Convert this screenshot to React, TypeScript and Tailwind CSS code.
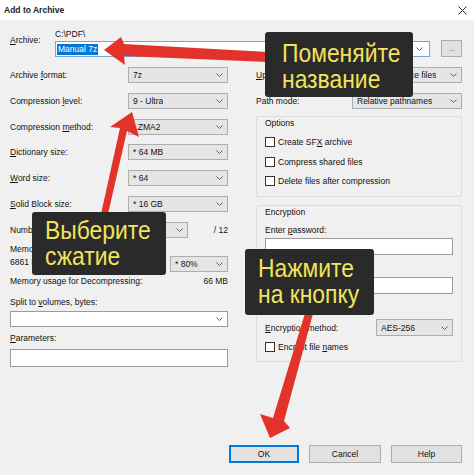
import React from 'react'

const Chev = () => (
  <svg width="7" height="4" viewBox="0 0 7 4" className="shrink-0">
    <path d="M0.5 0.5L3.5 3.5L6.5 0.5" fill="none" stroke="#606060" strokeWidth="1" />
  </svg>
)

const Select = ({ value, className = '' }: { value: string; className?: string }) => (
  <div className={`h-[16px] border border-[#adadad] bg-[#e5e5e5] flex items-center justify-between pl-[4px] pr-[4px] ${className}`}>
    <span className="truncate">{value}</span>
    <Chev />
  </div>
)

const Check = ({ children }: { children: React.ReactNode }) => (
  <div className="h-[12px] flex items-center gap-[3px]">
    <span className="w-[10px] h-[10px] border border-[#333] bg-white shrink-0" />
    <span>{children}</span>
  </div>
)

const U = ({ children }: { children: React.ReactNode }) => <span className="underline underline-offset-[1px]">{children}</span>

const Row = ({ label, value }: { label: React.ReactNode; value: string }) => (
  <div className="h-[16px] flex items-center justify-between">
    <span>{label}</span>
    <Select value={value} className="w-[100px]" />
  </div>
)

const Callout = ({ lines, className }: { lines: string[]; className: string }) => (
  <div className={`absolute bg-[#2a2a2a] rounded-[3px] text-[#f2e25c] text-[26px] leading-[26px] ${className}`}>
    <div className="scale-x-[0.88] origin-left whitespace-nowrap">
      {lines.map((l) => (
        <div key={l}>{l}</div>
      ))}
    </div>
  </div>
)

export default function App() {
  return (
    <div className="relative w-[474px] h-[475px] overflow-hidden bg-[#f0f0f0] text-[#111] text-[8.5px] leading-[12px] font-['Liberation_Sans',Arial,sans-serif] flex flex-col">
      {/* title bar */}
      <div className="h-[20px] bg-white flex items-center justify-between pl-[4px] pr-[7px] shrink-0">
        <span className="text-[8.5px] font-bold text-[#222]">Add to Archive</span>
        <svg width="9" height="9" viewBox="0 0 9 9">
          <path d="M0.5 0.5L8.5 8.5M8.5 0.5L0.5 8.5" stroke="#222" strokeWidth="1" />
        </svg>
      </div>

      <div className="pl-[10px] pr-[12px] flex-1 flex flex-col">
        {/* archive row */}
        <div className="h-[40px] flex">
          <div className="w-[45px] pt-[14px]">
            <U>A</U>rchive:
          </div>
          <div className="flex-1 flex flex-col">
            <div className="h-[10px] mt-[9px] leading-[10px]">C:\PDF\</div>
            <div className="flex items-end gap-[11px] mt-[1px]">
              <div className="flex-1 h-[16px] bg-white border border-[#6fa8dc] flex items-center justify-between pl-[1px] pr-[6px]">
                <span className="bg-[#0078d7] text-white px-[1px] leading-[11px]">Manual 7z</span>
                <Chev />
              </div>
              <div className="w-[21px] h-[17px] border border-[#adadad] bg-[#e1e1e1] flex items-center justify-center text-[#555] text-[7px]">...</div>
            </div>
          </div>
        </div>

        <div className="flex flex-1">
          {/* left column */}
          <div className="w-[218px] flex flex-col">
            <div className="flex flex-col gap-[9.8px] pt-[7px]">
              <Row label={<>Archive <U>f</U>ormat:</>} value="7z" />
              <Row label={<>Compression <U>l</U>evel:</>} value="9 - Ultra" />
              <Row label={<>Compression <U>m</U>ethod:</>} value="LZMA2" />
              <Row label={<><U>D</U>ictionary size:</>} value="* 64 MB" />
              <Row label={<><U>W</U>ord size:</>} value="* 64" />
              <Row label={<><U>S</U>olid Block size:</>} value="* 16 GB" />
              <div className="h-[16px] flex items-center">
                <span className="w-[118px]">Number of CPU <U>t</U>hreads:</span>
                <Select value="* 12" className="w-[60px]" />
                <span className="ml-auto">/ 12</span>
              </div>
            </div>
            <div className="h-[28px] mt-[4px] flex justify-between">
              <div className="leading-[13px] self-center">
                <div>Memory usage for Compressing:</div>
                <div>6861 MB</div>
              </div>
              <Select value="* 80%" className="w-[58px] self-end mb-[-2px]" />
            </div>
            <div className="h-[12px] mt-[5px] flex justify-between items-center">
              <span>Memory usage for Decompressing:</span>
              <span>66 MB</span>
            </div>
            <div className="h-[12px] mt-[9px] flex items-center whitespace-pre">
              Split to <U>v</U>olumes, bytes:
            </div>
            <div className="h-[16px] mt-[3px] bg-white border border-[#9a9a9a] flex items-center justify-end pr-[4px]">
              <Chev />
            </div>
            <div className="h-[12px] mt-[5px] flex items-center">
              <U>P</U>arameters:
            </div>
            <div className="h-[18px] mt-[5px] bg-white border border-[#9a9a9a]" />
          </div>

          {/* right column */}
          <div className="w-[206px] ml-[28px] flex flex-col">
            <div className="flex flex-col gap-[10px] pt-[7px]">
              <div className="h-[16px] flex items-center justify-between">
                <span><U>U</U>pdate mode:</span>
                <Select value="Add and replace files" className="w-[110px]" />
              </div>
              <div className="h-[16px] flex items-center justify-between">
                <span>Path mode:</span>
                <Select value="Relative pathnames" className="w-[110px]" />
              </div>
            </div>
            <div className="mt-[7px] h-[81px] border border-[#dcdcdc] rounded-[2px] pl-[8px] pt-[1px]">
              <div className="h-[11px] leading-[11px]">Options</div>
              <div className="flex flex-col gap-[7.5px] mt-[7px]">
                <Check>Create SF<U>X</U> archive</Check>
                <Check>Compress shared files</Check>
                <Check>Delete files after compression</Check>
              </div>
            </div>
            <div className="mt-[8px] h-[157px] border border-[#dcdcdc] rounded-[2px] px-[8px] pt-[1px] flex flex-col">
              <div className="h-[11px] leading-[11px]">Encryption</div>
              <div className="h-[12px] mt-[6px] flex items-center whitespace-pre">Enter <U>p</U>assword:</div>
              <div className="h-[17px] mt-[2px] bg-white border border-[#9a9a9a]" />
              <div className="h-[12px] mt-[6px] flex items-center">Reenter password:</div>
              <div className="h-[17px] mt-[4px] bg-white border border-[#9a9a9a]" />
              <div className="mt-[7px]">
                <Check>Show Password</Check>
              </div>
              <div className="h-[17px] mt-[6px] flex items-center justify-between">
                <span><U>E</U>ncryption method:</span>
                <Select value="AES-256" className="w-[77px] h-[17px]" />
              </div>
              <div className="mt-[5px]">
                <Check>Encrypt file <U>n</U>ames</Check>
              </div>
            </div>
          </div>
        </div>

        {/* buttons */}
        <div className="flex justify-end gap-[10px] mb-[12px] mt-auto">
          <div className="w-[70px] h-[18px] border-2 border-[#0078d7] bg-[#e1e1e1] flex items-center justify-center">OK</div>
          <div className="w-[72px] h-[18px] border border-[#adadad] bg-[#e1e1e1] flex items-center justify-center">Cancel</div>
          <div className="w-[71px] h-[18px] border border-[#adadad] bg-[#e1e1e1] flex items-center justify-center">Help</div>
        </div>
      </div>

      {/* arrows */}
      <svg className="absolute inset-0 pointer-events-none" width="474" height="475" viewBox="0 0 474 475">
        <polygon fill="#e2332a" points="104,50 121,37 124,44 268,52 268,62 124,56 125,65" />
        <polygon fill="#e2332a" points="132,112 139,137 127,131 108,214 101,214 120,128 110,127" />
        <polygon fill="#e2332a" points="270,438 260,414 273,418 306,310 314,310 284,421 290,428" />
      </svg>

      {/* callouts */}
      <Callout lines={['Поменяйте', 'название']} className="left-[265px] top-[32px] w-[148px] h-[65px] pl-[17px] pt-[8px]" />
      <Callout lines={['Выберите', 'сжатие']} className="left-[32px] top-[212px] w-[134px] h-[63px] pl-[13px] pt-[5px]" />
      <Callout lines={['Нажмите', 'на кнопку']} className="left-[245px] top-[249px] w-[129px] h-[66px] pl-[13px] pt-[6px]" />
    </div>
  )
}
